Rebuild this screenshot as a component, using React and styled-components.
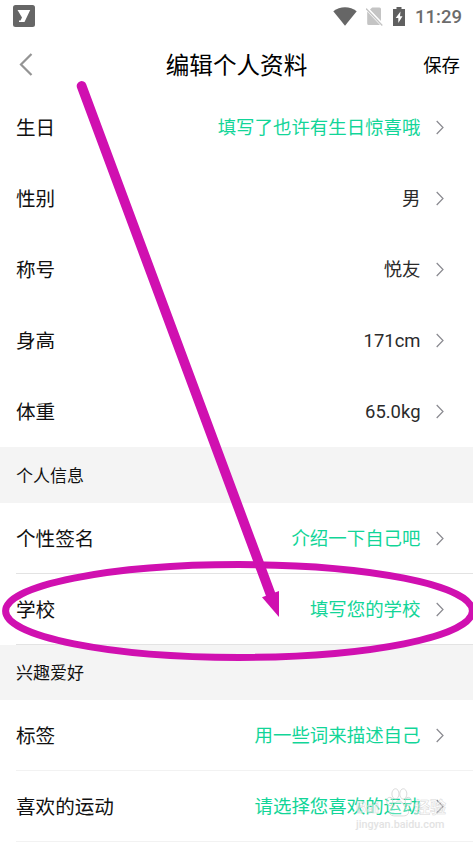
import React from "react";
import styled, { createGlobalStyle } from "styled-components";

const profile = [
  { label: "生日", value: "填写了也许有生日惊喜哦", empty: true },
  { label: "性别", value: "男" },
  { label: "称号", value: "悦友" },
  { label: "身高", value: "171cm" },
  { label: "体重", value: "65.0kg" },
];

const personal = [
  { label: "个性签名", value: "介绍一下自己吧", empty: true },
  { label: "学校", value: "填写您的学校", empty: true },
];

const hobbies = [
  { label: "标签", value: "用一些词来描述自己", empty: true },
  { label: "喜欢的运动", value: "请选择您喜欢的运动", empty: true },
];

const Rows = ({ items, line }) =>
  items.map((item) => (
    <Row key={item.label} $line={line}>
      <Label>{item.label}</Label>
      <Value $empty={item.empty}>{item.value}</Value>
      <Chevron viewBox="0 0 8 14">
        <path d="M0.7 1 L7 7.5 L0.7 14" />
      </Chevron>
    </Row>
  ));

const App = () => {
  return (
    <Screen>
      <GlobalStyle />
      <StatusBar>
        <svg width="22" height="22" viewBox="0 0 22 22">
          <rect width="22" height="22" rx="2.5" fill="#666" />
          <path d="M4.5 5 H17.2 L11.5 17 H6 V15.5 H7.5 L9 12.6 Z" fill="#fff" />
        </svg>
        <StatusIcons>
          <svg width="24" height="19" viewBox="0 0 24 19">
            <path d="M0.3 4.2 C7 -1 17 -1 23.7 4.2 L12 18.7 Z" fill="#666" />
          </svg>
          <svg width="18" height="19" viewBox="0 0 18 19">
            <path d="M6.2 0.5 H13.5 Q15 0.5 15 2 V14 L4 2.6 Z M1.2 4.5 L14 18 H2.7 Q1.2 18 1.2 16.5 Z" fill="#c4c4c4" />
            <path d="M0 1.5 L16.3 18.5" stroke="#c4c4c4" strokeWidth="1.3" />
          </svg>
          <svg width="12" height="19" viewBox="0 0 12 19">
            <path d="M3.5 0 H8.5 V2 H12 V19 H0 V2 H3.5 Z" fill="#606060" />
            <path d="M7.5 4.5 L2.7 11 H5.3 V16 L9.5 9.2 H7 Z" fill="#fff" />
          </svg>
          <Clock>11:29</Clock>
        </StatusIcons>
      </StatusBar>
      <Header>
        <BackIcon viewBox="0 0 14 23">
          <path d="M12.5 1 L2 11.5 L12.5 22" />
        </BackIcon>
        <Title>编辑个人资料</Title>
        <Save>保存</Save>
      </Header>
      <Rows items={profile} />
      <SectionTitle $height={56}>个人信息</SectionTitle>
      <Rows items={personal} line="#e3e3e3" />
      <SectionTitle $height={55}>兴趣爱好</SectionTitle>
      <Rows items={hobbies} line="#f2f2f2" />
      <Watermark>
        <Brand>
          <span>Bai</span>
          <Paw viewBox="0 0 24 27">
            <ellipse cx="8.7" cy="5.5" rx="3.3" ry="4.8" />
            <ellipse cx="16" cy="5.5" rx="3.3" ry="4.8" />
            <ellipse cx="3.4" cy="12.5" rx="2.8" ry="3.8" />
            <ellipse cx="20.6" cy="12.5" rx="2.8" ry="3.8" />
            <path d="M12 12 C8 12 8 17 5 19 C1 23 4 26 8 26 H16 C20 26 23 23 19 19 C16 17 16 12 12 12 Z" />
          </Paw>
          <span>经验</span>
        </Brand>
        <Site>jingyan.baidu.com</Site>
      </Watermark>
      <Marker viewBox="0 0 473 842">
        <ellipse cx="239" cy="611" rx="233.4" ry="46.4" strokeWidth="7" />
        <path d="M81.6 86 L270.5 594" strokeWidth="9.8" strokeLinecap="round" />
        <path d="M262 597.3 L279 591 V617 Z" fill="#d010b0" stroke="none" />
      </Marker>
    </Screen>
  );
};

export default App;

const GlobalStyle = createGlobalStyle`
  body {
    margin: 0;
    background: #fff;
  }
`;

const Screen = styled.div`
  position: relative;
  width: 473px;
  height: 842px;
  overflow: hidden;
  background: #fff;
  font-family: Roboto, "Noto Sans CJK SC", sans-serif;
`;

const StatusBar = styled.div`
  display: flex;
  align-items: center;
  justify-content: space-between;
  box-sizing: border-box;
  height: 32px;
  padding: 0 11px 0 13px;
`;

const StatusIcons = styled.div`
  display: flex;
  align-items: center;
  gap: 10px;

  svg + svg {
    margin-left: -1px;
  }
`;

const Clock = styled.span`
  padding-top: 2px;
  color: #6c6c6c;
  font-size: 18.5px;
  font-weight: 500;
  line-height: 30px;
`;

const Header = styled.header`
  display: grid;
  grid-template-columns: 1fr auto 1fr;
  align-items: center;
  box-sizing: border-box;
  height: 60px;
  padding: 4px 13px 0 19px;
`;

const BackIcon = styled.svg`
  width: 14px;
  height: 23px;
  fill: none;
  stroke: #949494;
  stroke-width: 2.2;
`;

const Title = styled.h1`
  margin: 0 6px 0 0;
  padding-top: 3px;
  color: #000;
  font-size: 23.6px;
  font-weight: 400;
  line-height: 32px;
`;

const Save = styled.span`
  justify-self: end;
  color: #000;
  font-size: 18.4px;
`;

const Row = styled.div`
  display: flex;
  align-items: center;
  box-sizing: border-box;
  height: 71px;
  margin-left: 16px;
  padding-right: 29.5px;
  border-bottom: 1px solid ${({ $line }) => $line || "transparent"};
`;

const Label = styled.span`
  flex: 1;
  padding-top: 4px;
  color: #111;
  font-size: 19.6px;
  line-height: 28px;
`;

const Value = styled.span`
  padding-top: 2px;
  color: ${({ $empty }) => ($empty ? "#12d598" : "#2b2b2b")};
  font-size: 18.45px;
  line-height: 28px;
`;

const Chevron = styled.svg`
  width: 8px;
  height: 14px;
  margin-left: 15px;
  overflow: visible;
  fill: none;
  stroke: #8a8a90;
  stroke-width: 1.2;
`;

const SectionTitle = styled.h2`
  box-sizing: border-box;
  margin: 0;
  padding: 2px 0 0 16px;
  height: ${({ $height }) => $height}px;
  line-height: ${({ $height }) => $height - 2}px;
  background: #f4f4f4;
  color: #111;
  font-size: 17px;
  font-weight: 400;
`;

const Watermark = styled.div`
  position: absolute;
  left: 356px;
  top: 787px;
  width: 90px;
  display: flex;
  flex-direction: column;
  opacity: 0.8;
`;

const Paw = styled.svg`
  width: 26px;
  height: 29px;
  margin-left: 4px;
  fill: rgba(255, 255, 255, 0.35);
  stroke: #d0d0d0;
  stroke-width: 0.9;
`;

const Brand = styled.div`
  display: flex;
  align-items: flex-end;
  justify-content: space-between;
  height: 30px;
  color: rgba(255, 255, 255, 0.6);
  font-size: 16px;
  font-weight: 700;
  line-height: 19px;
  -webkit-text-stroke: 0.5px #cfcfcf;
`;

const Site = styled.div`
  margin-top: 2px;
  color: #dcdcdc;
  font-size: 10.8px;
  font-weight: 500;
  line-height: 12px;
`;

const Marker = styled.svg`
  position: absolute;
  inset: 0;
  width: 473px;
  height: 842px;
  fill: none;
  stroke: #d010b0;
  pointer-events: none;
`;
